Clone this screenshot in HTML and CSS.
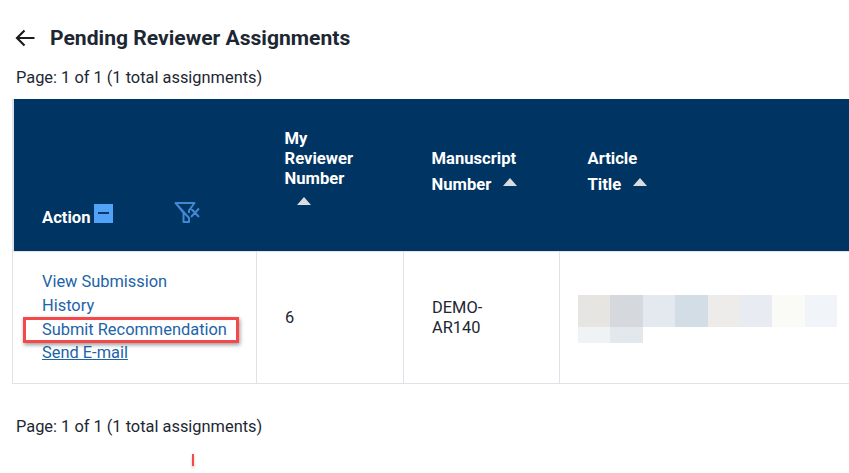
FILE: index.html
```html
<!DOCTYPE html>
<html lang="en">
<head>
<meta charset="utf-8">
<title>Pending Reviewer Assignments</title>
<link rel="stylesheet" href="styles.css">
</head>
<body>
<main class="page">
  <header class="title-row">
    <svg class="back" viewBox="0 0 20 18" aria-hidden="true"><path d="M19.500 9H2.500M9.500 1.500 2 9l7.500 7.500" fill="none" stroke="#1c1c1c" stroke-width="2.200"/></svg>
    <h1>Pending Reviewer Assignments</h1>
  </header>
  <p class="pager pager-top">Page: 1 of 1 (1 total assignments)</p>
  <table class="grid">
    <colgroup><col class="c1"><col class="c2"><col class="c3"><col class="c4"></colgroup>
    <thead>
      <tr>
        <th class="th-action">
          <div class="action-head">
            <span class="action-label">Action</span>
            <span class="collapse"><span class="dash"></span></span>
            <svg class="filter" viewBox="0 0 26 21" aria-hidden="true"><path d="M1.500 1H20.500L15 8.500V11M15 16V20H9.500V11L1.500 1ZM17 6.500l8 8.500M25 6.500l-8 8.500" fill="none" stroke="#4287d1" stroke-width="2" stroke-linejoin="round"/></svg>
          </div>
        </th>
        <th class="th-rev">My<br>Reviewer<br>Number<br><span class="sort sort-block"></span></th>
        <th class="th-sort"><span>Manuscript</span><br><span>Number</span><span class="sort"></span></th>
        <th class="th-sort"><span>Article</span><br><span>Title</span><span class="sort"></span></th>
      </tr>
    </thead>
    <tbody>
      <tr>
        <td class="td-action">
          <a href="#">View Submission</a>
          <a href="#">History</a>
          <a href="#">Submit Recommendation</a>
          <a href="#" class="underlined">Send E-mail</a>
        </td>
        <td class="td-text">6</td>
        <td class="td-text">DEMO-<br>AR140</td>
        <td>
          <div class="blur">
            <i class="b1"></i><i class="b2"></i><i class="b3"></i><i class="b4"></i><i class="b5"></i><i class="b6"></i><i class="b7"></i><i class="b8"></i>
            <i class="b9 short"></i><i class="b10 short"></i>
          </div>
        </td>
      </tr>
    </tbody>
  </table>
  <p class="pager pager-bottom">Page: 1 of 1 (1 total assignments)</p>
  <div class="highlight"></div>
  <div class="tick"></div>
</main>
</body>
</html>
```
FILE: styles.css
```css
html, body { margin: 0; padding: 0; height: 100%; overflow: hidden; background: #fff; }
body { font-family: Roboto, "Liberation Sans", sans-serif; font-size: 16.400px; color: #1d2733; }
.page { position: relative; width: 849px; height: 473px; overflow: hidden; }
.title-row { display: flex; align-items: center; gap: 15px; padding: 27px 0 0 15px; height: 22px; }
.back { width: 20px; height: 18px; flex: none; }
h1 { margin: 0; font-size: 21.100px; font-weight: 700; line-height: 22px; color: #1d2733; white-space: nowrap; }
.pager { margin: 0; padding-left: 16px; line-height: 20px; }
.pager-top { padding-top: 19px; }
.pager-bottom { padding-top: 33px; }
.grid { margin: 11px 0 0 12px; width: 1000px; table-layout: fixed; border-collapse: collapse; }
.c1 { width: 244px; } .c2 { width: 147px; } .c3 { width: 156px; }
thead tr { background: #003462; height: 152px; }
th { padding: 0 0 0 28px; color: #fff; font-size: 16.600px; font-weight: 700; text-align: left; line-height: 20px; vertical-align: middle; }
thead th:first-child { padding-left: 29px; border-left: 1px solid #dfe2e6; background: linear-gradient(#dfe2e6, #dfe2e6) left top / 1px 100% no-repeat; }
.th-rev { vertical-align: top; padding-top: 30px; }
.th-sort { line-height: 26px; padding-bottom: 6px; }
.th-action { vertical-align: bottom; padding-bottom: 23px; }
.action-head { display: flex; align-items: flex-end; }
.action-label { line-height: 20px; }
.collapse { width: 19px; height: 19px; margin: 0 0 5px 4px; background: #52a3f7; display: flex; justify-content: center; padding-top: 8px; box-sizing: border-box; }
.dash { width: 11px; height: 2px; background: #0b3a66; }
.filter { width: 26px; height: 21px; margin: 0 0 5px 61px; }
.sort { display: inline-block; width: 0; height: 0; margin-left: 12px; border-left: 7px solid transparent; border-right: 7px solid transparent; border-bottom: 8px solid #d9dde0; vertical-align: 4px; }
.sort-block { margin: 8px 0 0 12px; vertical-align: top; }
td { box-sizing: border-box; border: 1px solid #dfe2e6; padding: 0 0 0 28px; height: 132px; line-height: 20px; vertical-align: middle; }
tbody td:last-child { padding-left: 18px; border-right: 0; }
.td-text { padding-top: 2px; }
.td-action { padding-left: 29px; padding-top: 1px; }
.td-action a { display: block; color: #1b64a8; text-decoration: none; line-height: 23.700px; }
.td-action .underlined { text-decoration: underline; }
.blur { display: grid; grid-template-columns: repeat(8, 32.375px); width: 259px; margin-top: 4px; }
.blur i { display: block; height: 32px; }
.blur .short { height: 16px; }
.b1 { background: #e7e5e2; } .b2 { background: #d5d8dc; } .b3 { background: #e4e8ef; } .b4 { background: #d2dde6; }
.b5 { background: #edecea; } .b6 { background: #e8ebf2; } .b7 { background: #fafaf7; } .b8 { background: #f1f5f9; }
.b9 { background: #eff3f6; } .b10 { background: #e3e8ec; }
.highlight { position: absolute; left: 23px; top: 317px; width: 216px; height: 26px; box-sizing: border-box; border: 3px solid #f4484a; box-shadow: 1px 2px 4px rgba(0,0,0,.4); }
.tick { position: absolute; left: 192px; top: 454px; width: 2px; height: 12px; background: #f4484a; box-shadow: 0 2px 3px rgba(0,0,0,.25); }
```
